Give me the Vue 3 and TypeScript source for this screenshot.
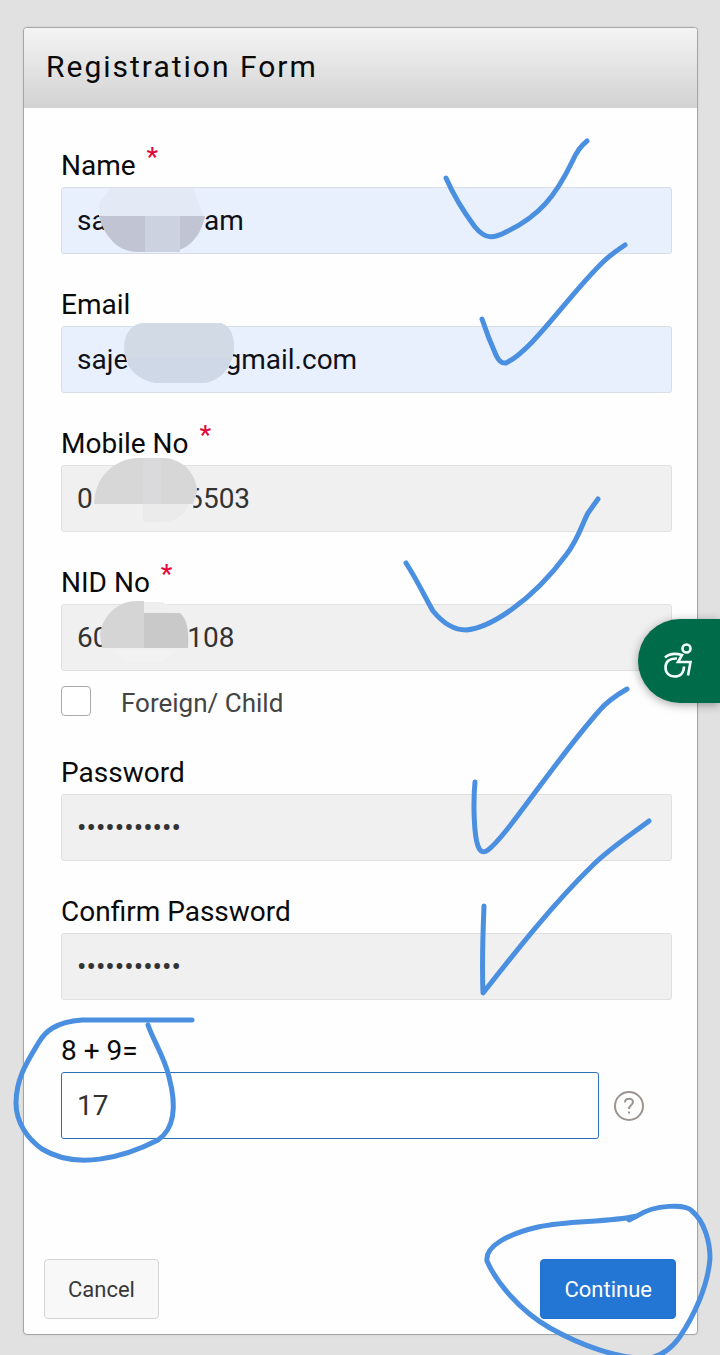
<script setup lang="ts">
import { ref } from 'vue'

interface Patch {
  d: string
  fill: string
}

interface Field {
  id: string
  label: string
  value: string
  inputmode?: 'text' | 'email' | 'tel' | 'numeric'
  required?: boolean
  autofilled?: boolean
  patches?: Patch[]
}

const letterGap = (count: number): string => '\u00a0'.repeat(count)
const digitGap = (count: number): string => '\u2007'.repeat(count)

const identityFields = ref<Field[]>([
  {
    id: 'name',
    label: 'Name',
    inputmode: 'text',
    value: `sa${letterGap(14)}am`,
    required: true,
    autofilled: true,
    patches: [
      { d: 'M50 1 H132 L143 29 H38 V16 Z', fill: '#e3eaf6' },
      { d: 'M38 29 H144 C140 50 126 65 106 65 H76 C58 65 43 50 38 29 Z', fill: '#c1c5d3' },
      { d: 'M84 29 H119 V65 H84 Z', fill: '#cdd2e1' },
    ],
  },
  {
    id: 'email',
    label: 'Email',
    inputmode: 'email',
    value: `saje${letterGap(14)}gmail.com`,
    autofilled: true,
    patches: [
      { d: 'M158 22 H173 L170 38 L163 47 H158 Z', fill: '#e8f0fe' },
      { d: 'M80 -3 H160 C170 0 174 12 173 24 C171 44 156 57 140 57 H96 C78 55 64 40 63 22 C63 10 68 0 80 -3 Z', fill: '#d2dae6' },
      { d: 'M65 32 H170 C165 49 152 57 140 57 H96 C80 55 67 45 65 32 Z', fill: '#cfd8e6' },
    ],
  },
  {
    id: 'mobile',
    label: 'Mobile No',
    inputmode: 'tel',
    value: `0${digitGap(6)}6503`,
    required: true,
    patches: [
      { d: 'M126 22 H136 L134 36 L131 46 H126 Z', fill: '#f0f0f0' },
      { d: 'M82 39 H128 C124 51 112 57 102 57 H82 Z', fill: '#ebebeb' },
      { d: 'M33 39 C33 14 52 -7 78 -7 H102 C122 -7 136 10 136 27 L132 39 Z', fill: '#d7d7d7' },
      { d: 'M82 -7 H100 V39 H82 Z', fill: '#dadadc' },
    ],
  },
  {
    id: 'nid',
    label: 'NID No',
    inputmode: 'numeric',
    value: `60${digitGap(5)}108`,
    required: true,
    patches: [
      { d: 'M83 -2 H102 L120 9 H83 Z', fill: '#efefef' },
      { d: 'M39 30 C42 10 58 -3 76 -3 H83 V44 H41 Z', fill: '#d5d5d5' },
      { d: 'M83 9 H119 C126 15 128 25 127 44 H83 Z', fill: '#c9c9c9' },
      { d: 'M50 45 H118 L102 57 H64 Z', fill: '#f2f2f2' },
    ],
  },
])

const passwordFields = ref<Field[]>([
  { id: 'password', label: 'Password', value: 'x'.repeat(11) },
  { id: 'confirm', label: 'Confirm Password', value: 'x'.repeat(11) },
])

const foreignChild = ref(false)
const captcha = ref('17')

const penStrokes: string[] = [
  'M446 178 C453 194 463 211 475 227 C485 239 493 239 506 232 C540 216 556 195 572 162 Q578 148 587 141',
  'M482 319 C487 334 491 344 496 355 Q500 364 506 363 C533 350 567 297 603 262 Q610 255 625 245',
  'M406 563 C417 580 425 597 433 611 C442 622 453 630 466 630 C490 628 532 601 566 555 C578 540 583 522 588 513 L598 499',
  'M475 782 C473 803 474 836 478 846 Q481 855 488 850 C507 836 550 767 599 711 Q608 700 627 689',
  'M484 906 C483 930 482 968 483 993 C513 955 552 905 592 866 C610 848 632 834 649 821',
  'M192 1020 H82 C55 1022 45 1032 39 1042 C29 1059 16 1077 16 1103 C16 1123 28 1139 42 1149 C76 1170 123 1158 158 1140 C174 1129 177 1107 169 1077 C165 1058 153 1040 148 1025',
  'M629 1220 L637 1216 C655 1204 686 1204 692 1211 C705 1222 710 1243 710 1258 C708 1286 694 1316 679 1338 C670 1350 660 1356 650 1358 C620 1360 580 1345 550 1328 C520 1311 496 1282 487 1261 C485 1246 508 1234 538 1227 C571 1220 605 1223 637 1216',
]
</script>

<template>
  <main class="page">
    <form class="card" @submit.prevent>
      <header class="card-header">
        <h1>Registration Form</h1>
      </header>

      <div class="card-body">
        <div v-for="field in identityFields" :key="field.id" class="field">
          <label :for="field.id">
            {{ field.label }}<span v-if="field.required" class="required">*</span>
          </label>
          <div class="control">
            <input
              :id="field.id"
              v-model="field.value"
              class="box"
              :class="{ autofilled: field.autofilled }"
              type="text"
              :inputmode="field.inputmode"
              spellcheck="false"
            />
            <svg v-if="field.patches" class="patches" width="180" height="67" aria-hidden="true">
              <path v-for="patch in field.patches" :key="patch.d" :d="patch.d" :fill="patch.fill" />
            </svg>
          </div>
        </div>

        <div class="check-row">
          <input id="foreign" v-model="foreignChild" type="checkbox" />
          <label for="foreign">Foreign/ Child</label>
        </div>

        <div v-for="field in passwordFields" :key="field.id" class="field">
          <label :for="field.id">{{ field.label }}</label>
          <input :id="field.id" v-model="field.value" class="box" type="password" />
        </div>

        <div class="field">
          <label for="captcha">8 + 9=</label>
          <div class="captcha-row">
            <input id="captcha" v-model="captcha" class="box active" type="text" inputmode="numeric" />
            <button type="button" class="help" aria-label="Help">
              <svg width="30" height="30" viewBox="0 0 30 30" fill="none" stroke="#9b9490" aria-hidden="true">
                <circle cx="15" cy="15" r="14" stroke-width="2" />
                <path d="M11 11.500 C11 6.500 19 6.500 19 11 C19 14 15 14 15 18" stroke-width="2" />
                <path d="M15 20.500 V22.500" stroke-width="2" />
              </svg>
            </button>
          </div>
        </div>
      </div>

      <footer class="card-footer">
        <button type="button" class="btn">Cancel</button>
        <button type="submit" class="btn primary">Continue</button>
      </footer>
    </form>

    <button type="button" class="accessibility" aria-label="Accessibility options">
      <svg width="30" height="38" viewBox="0 0 30 38" fill="none" stroke="#f2fffa" stroke-width="2.600" aria-hidden="true">
        <circle cx="23.500" cy="6.500" r="4" />
        <path d="M2 15.500 C7 11 12 11 19 13 L15 20 H27.500 L25 33.500" />
        <path d="M14 16.500 C6 16 2.500 20 2.500 25.500 C2.500 31 6.500 34.500 11.500 34.500 C17.500 34.500 21 30.500 21 24.500" />
      </svg>
    </button>

    <svg class="pen" viewBox="0 0 720 1355" aria-hidden="true">
      <path v-for="stroke in penStrokes" :key="stroke" :d="stroke" />
    </svg>
  </main>
</template>

<style>
body {
  margin: 0;
  background: #e1e1e1;
}
</style>

<style scoped>
.page {
  position: relative;
  box-sizing: border-box;
  min-height: 100vh;
  padding: 27px 22px 20px 23px;
  overflow: hidden;
  background: #e1e1e1;
  color: #0a0a0a;
  font-family: Roboto, "Liberation Sans", sans-serif;
}

.card {
  border: 1px solid #a3a5a8;
  border-radius: 4px;
  background: #fefefe;
  box-shadow: 0 0 2px #c8c8c8;
}

.card-header {
  box-sizing: border-box;
  display: flex;
  align-items: center;
  height: 80px;
  padding: 0 22px 2px;
  border-radius: 3px 3px 0 0;
  background: linear-gradient(#f4f4f4, #d2d2d2);
}

h1 {
  margin: 0;
  font-size: 30px;
  font-weight: 400;
  line-height: 36px;
  letter-spacing: 2px;
}

.card-body {
  display: flex;
  flex-direction: column;
  gap: 34px;
  padding: 41px 25px 120px 37px;
}

.field label {
  display: block;
  padding-top: 1px;
  margin-bottom: 5px;
  font-size: 28px;
  line-height: 32px;
}

.required {
  margin-left: 11px;
  color: #e4073c;
  font-size: 26px;
  font-weight: 500;
  line-height: 0;
  vertical-align: 9px;
}

.control {
  position: relative;
}

.patches {
  position: absolute;
  top: 0;
  left: 0;
  overflow: visible;
  pointer-events: none;
}

.box {
  display: block;
  box-sizing: border-box;
  width: 100%;
  height: 67px;
  margin: 0;
  padding: 0 15px;
  border: 1px solid #e0e0e0;
  border-radius: 3px;
  outline: none;
  background: #f0f0f0;
  color: #333;
  font-family: inherit;
  font-size: 28px;
}

.box.autofilled {
  border-color: #d8dde6;
  background: #e8f0fe;
  color: #101018;
}

.box.active {
  border-color: #2a71b8;
  background: #fff;
}

.check-row {
  display: flex;
  align-items: flex-start;
  gap: 30px;
  height: 30px;
  margin: -19px 0 6px;
}

.check-row input {
  box-sizing: border-box;
  width: 30px;
  height: 30px;
  margin: 0;
  appearance: none;
  border: 1px solid #aaa;
  border-radius: 4px;
  background: #fff;
}

.check-row label {
  color: #444;
  font-size: 26px;
  line-height: 34px;
}

.captcha-row {
  display: flex;
  align-items: center;
  gap: 15px;
  padding-right: 28px;
}

.captcha-row .box {
  flex: 1;
}

.help {
  display: block;
  width: 30px;
  height: 30px;
  padding: 0;
  border: 0;
  background: none;
}

.help svg {
  display: block;
}

.card-footer {
  display: flex;
  justify-content: space-between;
  padding: 0 21px 15px 20px;
}

.btn {
  height: 60px;
  padding: 0 23px;
  border: 1px solid #d5d5d5;
  border-radius: 4px;
  background: #f8f8f8;
  color: #383838;
  font-family: inherit;
  font-size: 22px;
}

.btn.primary {
  border-color: #2172d0;
  background: #2376d3;
  color: #fff;
}

.accessibility {
  position: absolute;
  top: 619px;
  right: 0;
  display: flex;
  align-items: center;
  width: 82px;
  height: 84px;
  padding: 0 0 0 25px;
  border: 0;
  border-radius: 42px 0 0 42px;
  background: #006b48;
  box-shadow: 0 2px 10px rgb(0 0 0 / 35%);
}

.pen {
  position: absolute;
  top: 0;
  left: 0;
  width: 100%;
  pointer-events: none;
  fill: none;
  stroke: #4a8fe0;
  stroke-width: 5;
  stroke-linecap: round;
  stroke-linejoin: round;
}
</style>
